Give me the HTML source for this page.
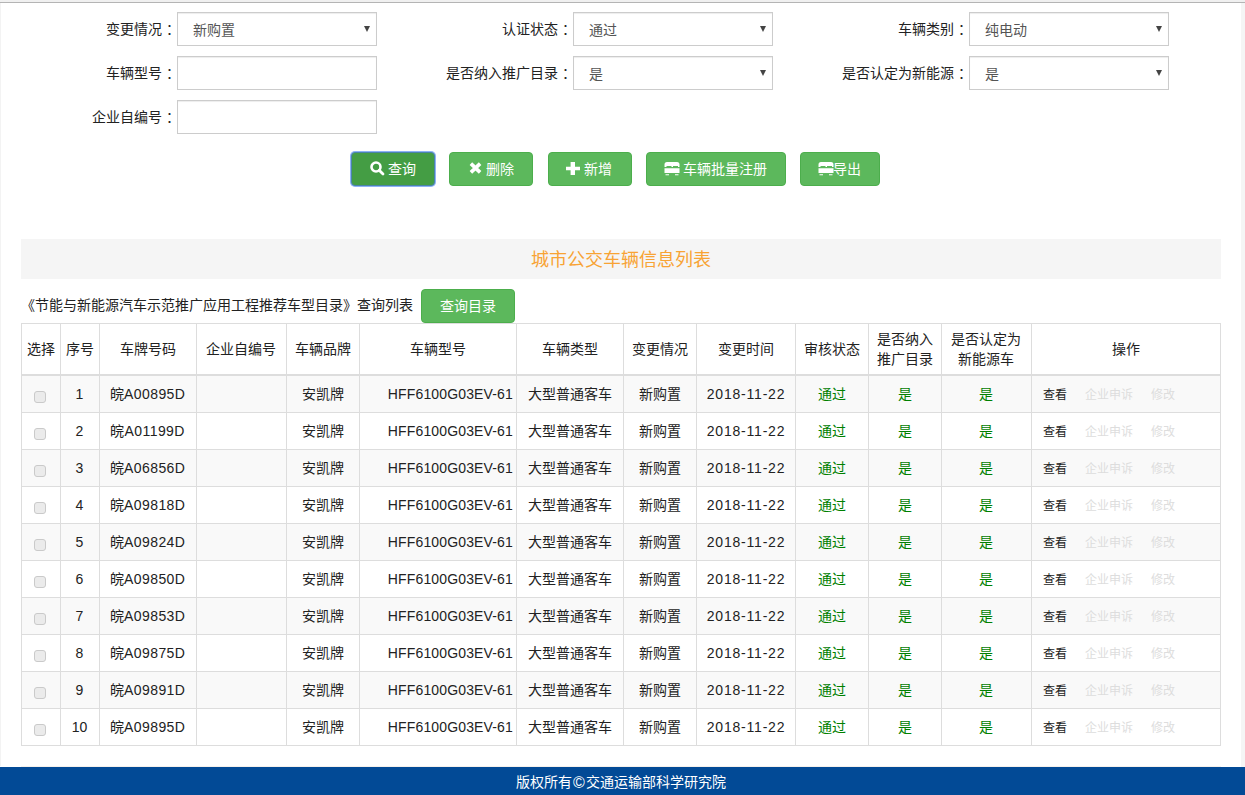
<!DOCTYPE html>
<html lang="zh-CN">
<head>
<meta charset="utf-8">
<title>城市公交车辆信息列表</title>
<style>
*{box-sizing:border-box;}
html,body{margin:0;padding:0;}
body{width:1245px;height:795px;overflow:hidden;position:relative;background:#fff;
  font-family:"Liberation Sans",sans-serif;font-size:14px;line-height:20px;color:#333;}
.abs{position:absolute;}
#topstrip{left:0;top:0;width:1245px;height:2px;background:#f0f0f0;}
#topline{left:0;top:2px;width:1245px;height:1px;background:#b4b4b4;}
#leftstrip{left:0;top:3px;width:1px;height:763px;background:#f3f3f3;}
#rightstrip{left:1241px;top:3px;width:4px;height:764px;background:#f5f5f5;}
.lbl{position:absolute;height:34px;line-height:34px;text-align:right;white-space:nowrap;color:#222;}
.lbl .c{position:relative;left:4px;}
.fld{position:absolute;width:200px;height:34px;border:1px solid #ccc;background:#fff;
  box-shadow:inset 0 1px 1px rgba(0,0,0,.075);line-height:34px;padding-left:15px;color:#555;white-space:nowrap;}
.fld i{position:absolute;right:6px;top:13px;width:0;height:0;border-left:3.5px solid transparent;border-right:3.5px solid transparent;border-top:6px solid #444;}
.btn{position:absolute;height:34px;border:1px solid #4cae4c;border-radius:4px;background:#5cb85c;color:#fff;
  line-height:32px;white-space:nowrap;}
.btn svg{position:absolute;}
.btn span{position:absolute;top:0;}
#band{left:21px;top:239px;width:1200px;height:40px;background:#f5f5f5;text-align:center;line-height:42px;font-size:18px;color:#f8a334;}
#qtxt{left:21px;top:295px;height:20px;line-height:20px;white-space:nowrap;color:#222;}
table{position:absolute;left:21px;top:323px;width:1200px;border-collapse:separate;border-spacing:0;table-layout:fixed;
  border-left:1px solid #ddd;border-top:1px solid #ddd;}
th,td{border-right:1px solid #ddd;border-bottom:1px solid #ddd;padding:0 1px 0 0;text-align:center;vertical-align:middle;
  white-space:nowrap;overflow:hidden;font-weight:normal;color:#222;}
th{height:52px;border-bottom:2px solid #ddd;line-height:20px;}
td{height:37px;line-height:20px;}
tr.o td{background:#f9f9f9;}
td.g{color:#008000;}
td.m{text-align:right;padding-right:3px;letter-spacing:0.15px;}
td.d{letter-spacing:0.8px;padding-left:1px;}
td.p{letter-spacing:0.4px;}
td.op{text-align:left;font-size:12px;padding-left:10.5px;padding-top:2px;letter-spacing:0.25px;}
td.op b{font-weight:normal;color:#ddd;margin-left:17.5px;}
.cb{display:block;position:relative;top:3px;width:12px;height:12px;margin:0 0 0 12px;border:1px solid #cacaca;border-radius:3px;background:#ebebeb;}
#footer{left:0;top:767px;width:1245px;height:28px;background:#024a96;color:#fff;text-align:center;line-height:30px;padding-right:3px;}
</style>
</head>
<body>
<div id="topstrip" class="abs"></div>
<div id="topline" class="abs"></div>
<div id="leftstrip" class="abs"></div>
<div id="rightstrip" class="abs"></div>
<div class="abs" style="left:21px;top:766px;width:1200px;height:1px;background:#f6f1ec;"></div>

<div class="lbl" style="right:1069px;top:12px;">变更情况<span class="c">：</span></div>
<div class="fld" style="left:177px;top:12px;">新购置<i></i></div>
<div class="lbl" style="right:1069px;top:56px;">车辆型号<span class="c">：</span></div>
<div class="fld" style="left:177px;top:56px;"></div>
<div class="lbl" style="right:1069px;top:100px;">企业自编号<span class="c">：</span></div>
<div class="fld" style="left:177px;top:100px;"></div>

<div class="lbl" style="right:673px;top:12px;">认证状态<span class="c">：</span></div>
<div class="fld" style="left:573px;top:12px;">通过<i></i></div>
<div class="lbl" style="right:673px;top:56px;">是否纳入推广目录<span class="c">：</span></div>
<div class="fld" style="left:573px;top:56px;">是<i></i></div>

<div class="lbl" style="right:277px;top:12px;">车辆类别<span class="c">：</span></div>
<div class="fld" style="left:969px;top:12px;">纯电动<i></i></div>
<div class="lbl" style="right:277px;top:56px;">是否认定为新能源<span class="c">：</span></div>
<div class="fld" style="left:969px;top:56px;">是<i></i></div>

<div class="btn" style="left:351px;top:152px;width:84px;background:#449d44;border-color:#4a84a8;box-shadow:0 0 0 1px #8db2f7;">
  <svg style="left:18px;top:8px" width="15" height="15" viewBox="0 0 15 15"><circle cx="6" cy="6" r="4.5" fill="none" stroke="#fff" stroke-width="2.6"/><path d="M9.2 9.2 L13 13" stroke="#fff" stroke-width="2.8" stroke-linecap="round"/></svg>
  <span style="left:36px;">查询</span>
</div>
<div class="btn" style="left:449px;top:152px;width:84px;">
  <svg style="left:19px;top:9px" width="13" height="12" viewBox="0 0 13 12"><path d="M1.9 1.7 L11.1 10.3 M11.1 1.7 L1.9 10.3" stroke="#fff" stroke-width="3.7"/></svg>
  <span style="left:36px;">删除</span>
</div>
<div class="btn" style="left:548px;top:152px;width:84px;">
  <svg style="left:17px;top:9px" width="14" height="13" viewBox="0 0 14 13"><path d="M4.6 0 H9 V4.8 H14 V8.3 H9 V13 H4.6 V8.3 H0 V4.8 H4.6 Z" fill="#fff"/></svg>
  <span style="left:35px;">新增</span>
</div>
<div class="btn" style="left:646px;top:152px;width:140px;">
  <svg style="left:17px;top:9px" width="16" height="14" viewBox="0 0 16 14"><path d="M0.5 5 V2.5 Q0.5 0 3 0 H13 Q15.5 0 15.5 2.5 V5 H14 V4 H9 V5 H7.5 V4 H2.5 V5 Z M0.5 6.2 H15.5 V11 H0.5 Z M1.5 12.2 H5 V13.2 H1.5 Z M11 12.2 H14.5 V13.2 H11 Z" fill="#fff"/></svg>
  <span style="left:36px;">车辆批量注册</span>
</div>
<div class="btn" style="left:800px;top:152px;width:80px;">
  <svg style="left:17px;top:9px" width="16" height="14" viewBox="0 0 16 14"><path d="M0.5 5 V2.5 Q0.5 0 3 0 H13 Q15.5 0 15.5 2.5 V5 H14 V4 H9 V5 H7.5 V4 H2.5 V5 Z M0.5 6.2 H15.5 V11 H0.5 Z M1.5 12.2 H5 V13.2 H1.5 Z M11 12.2 H14.5 V13.2 H11 Z" fill="#fff"/></svg>
  <span style="left:32px;">导出</span>
</div>

<div id="band" class="abs">城市公交车辆信息列表</div>
<div id="qtxt" class="abs">《节能与新能源汽车示范推广应用工程推荐车型目录》查询列表</div>
<div class="btn" style="left:421px;top:289px;width:94px;text-align:center;">查询目录</div>

<table>
<colgroup><col style="width:39px"><col style="width:39px"><col style="width:97px"><col style="width:90px"><col style="width:73px"><col style="width:157px"><col style="width:107px"><col style="width:73px"><col style="width:99px"><col style="width:73px"><col style="width:73px"><col style="width:90px"><col style="width:189px"></colgroup>
<thead>
<tr><th>选择</th><th>序号</th><th>车牌号码</th><th>企业自编号</th><th>车辆品牌</th><th>车辆型号</th><th>车辆类型</th><th>变更情况</th><th>变更时间</th><th>审核状态</th><th>是否纳入<br>推广目录</th><th>是否认定为<br>新能源车</th><th>操作</th></tr>
</thead>
<tbody>
<tr class="o"><td><span class="cb"></span></td><td>1</td><td class="p">皖A00895D</td><td></td><td>安凯牌</td><td class="m">HFF6100G03EV-61</td><td>大型普通客车</td><td>新购置</td><td class="d">2018-11-22</td><td class="g">通过</td><td class="g">是</td><td class="g">是</td><td class="op">查看<b>企业申诉</b><b>修改</b></td></tr>
<tr><td><span class="cb"></span></td><td>2</td><td class="p">皖A01199D</td><td></td><td>安凯牌</td><td class="m">HFF6100G03EV-61</td><td>大型普通客车</td><td>新购置</td><td class="d">2018-11-22</td><td class="g">通过</td><td class="g">是</td><td class="g">是</td><td class="op">查看<b>企业申诉</b><b>修改</b></td></tr>
<tr class="o"><td><span class="cb"></span></td><td>3</td><td class="p">皖A06856D</td><td></td><td>安凯牌</td><td class="m">HFF6100G03EV-61</td><td>大型普通客车</td><td>新购置</td><td class="d">2018-11-22</td><td class="g">通过</td><td class="g">是</td><td class="g">是</td><td class="op">查看<b>企业申诉</b><b>修改</b></td></tr>
<tr><td><span class="cb"></span></td><td>4</td><td class="p">皖A09818D</td><td></td><td>安凯牌</td><td class="m">HFF6100G03EV-61</td><td>大型普通客车</td><td>新购置</td><td class="d">2018-11-22</td><td class="g">通过</td><td class="g">是</td><td class="g">是</td><td class="op">查看<b>企业申诉</b><b>修改</b></td></tr>
<tr class="o"><td><span class="cb"></span></td><td>5</td><td class="p">皖A09824D</td><td></td><td>安凯牌</td><td class="m">HFF6100G03EV-61</td><td>大型普通客车</td><td>新购置</td><td class="d">2018-11-22</td><td class="g">通过</td><td class="g">是</td><td class="g">是</td><td class="op">查看<b>企业申诉</b><b>修改</b></td></tr>
<tr><td><span class="cb"></span></td><td>6</td><td class="p">皖A09850D</td><td></td><td>安凯牌</td><td class="m">HFF6100G03EV-61</td><td>大型普通客车</td><td>新购置</td><td class="d">2018-11-22</td><td class="g">通过</td><td class="g">是</td><td class="g">是</td><td class="op">查看<b>企业申诉</b><b>修改</b></td></tr>
<tr class="o"><td><span class="cb"></span></td><td>7</td><td class="p">皖A09853D</td><td></td><td>安凯牌</td><td class="m">HFF6100G03EV-61</td><td>大型普通客车</td><td>新购置</td><td class="d">2018-11-22</td><td class="g">通过</td><td class="g">是</td><td class="g">是</td><td class="op">查看<b>企业申诉</b><b>修改</b></td></tr>
<tr><td><span class="cb"></span></td><td>8</td><td class="p">皖A09875D</td><td></td><td>安凯牌</td><td class="m">HFF6100G03EV-61</td><td>大型普通客车</td><td>新购置</td><td class="d">2018-11-22</td><td class="g">通过</td><td class="g">是</td><td class="g">是</td><td class="op">查看<b>企业申诉</b><b>修改</b></td></tr>
<tr class="o"><td><span class="cb"></span></td><td>9</td><td class="p">皖A09891D</td><td></td><td>安凯牌</td><td class="m">HFF6100G03EV-61</td><td>大型普通客车</td><td>新购置</td><td class="d">2018-11-22</td><td class="g">通过</td><td class="g">是</td><td class="g">是</td><td class="op">查看<b>企业申诉</b><b>修改</b></td></tr>
<tr><td><span class="cb"></span></td><td>10</td><td class="p">皖A09895D</td><td></td><td>安凯牌</td><td class="m">HFF6100G03EV-61</td><td>大型普通客车</td><td>新购置</td><td class="d">2018-11-22</td><td class="g">通过</td><td class="g">是</td><td class="g">是</td><td class="op">查看<b>企业申诉</b><b>修改</b></td></tr>
</tbody>
</table>

<div id="footer" class="abs">版权所有<span style="display:inline-block;width:14px;text-align:center;font-size:16px;line-height:1;vertical-align:-1px">©</span>交通运输部科学研究院</div>
</body>
</html>
